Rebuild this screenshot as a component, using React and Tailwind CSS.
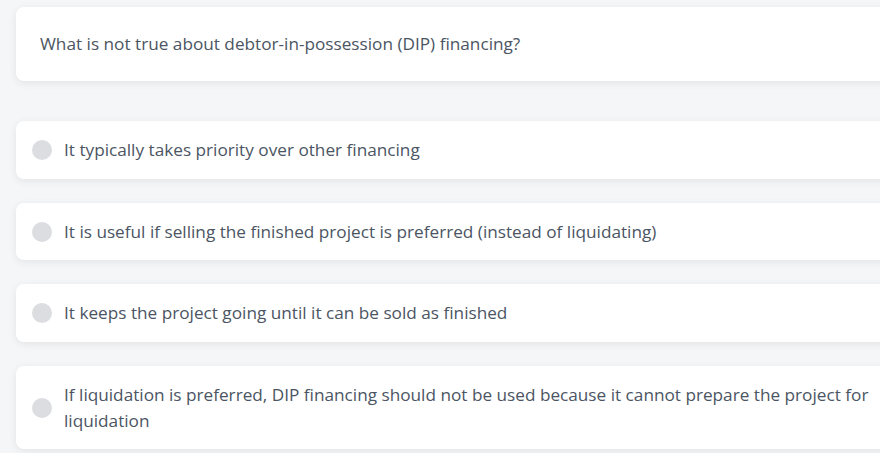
import React from 'react';

const options = [
  'It typically takes priority over other financing',
  'It is useful if selling the finished project is preferred (instead of liquidating)',
  'It keeps the project going until it can be sold as finished',
  'If liquidation is preferred, DIP financing should not be used because it cannot prepare the project for liquidation',
];

const App = () => (
  <div
    className="min-h-[453px] w-full overflow-hidden bg-[#f5f6f8] pt-[7px] pl-4 text-[17.2px] leading-[26px] text-[#4b5563]"
    style={{ fontFamily: '"Open Sans", "Noto Sans", sans-serif' }}
  >
    <div className="w-[900px] rounded-lg bg-white p-6 shadow-[0_2px_8px_rgba(0,0,0,0.08)]">
      What is not true about debtor-in-possession (DIP) financing?
    </div>

    <div className="mt-10 flex w-[900px] flex-col gap-6">
      {options.map((text) => (
        <div
          key={text}
          className="flex items-center gap-3 rounded-lg bg-white pt-4 pb-[15.5px] pl-4 pr-4 shadow-[0_2px_8px_rgba(0,0,0,0.08)]"
        >
          <span className="h-5 w-5 shrink-0 rounded-full bg-[#dcdde0]" />
          <span>{text}</span>
        </div>
      ))}
    </div>
  </div>
);

export default App;
